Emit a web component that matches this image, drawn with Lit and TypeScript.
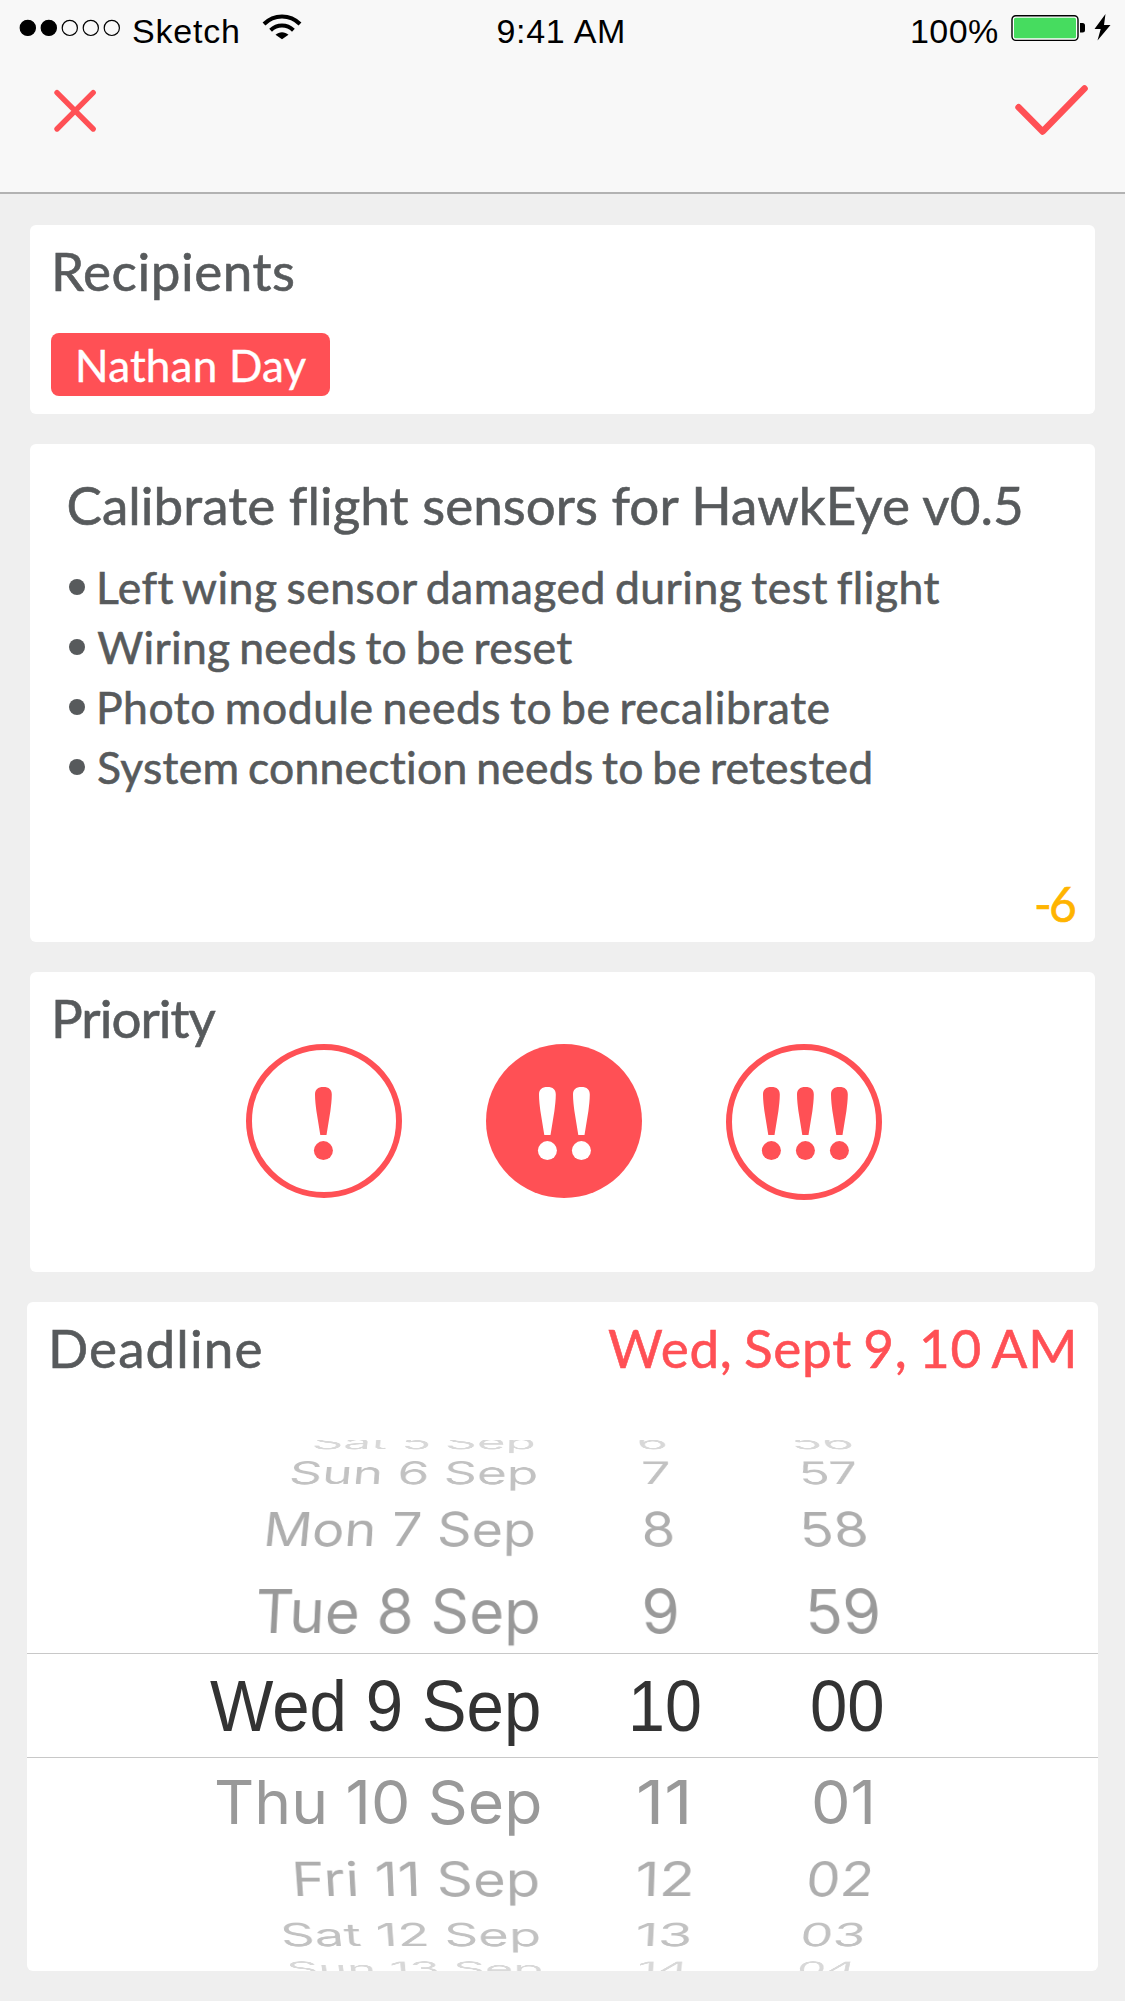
import { LitElement, html, svg, css } from "lit";
import { customElement, property } from "lit/decorators.js";
import { styleMap } from "lit/directives/style-map.js";

const pen = document.createElement("canvas").getContext("2d")!;

/** Horizontal ink bounds of a string, relative to its pen origin. */
function ink(text: string, font: string) {
  pen.font = font;
  const m = pen.measureText(text);
  return { left: -m.actualBoundingBoxLeft, width: m.actualBoundingBoxLeft + m.actualBoundingBoxRight };
}

/** One line of text, tracked so that its ink is exactly `inkWidth` wide. */
@customElement("tracked-text")
class TrackedText extends LitElement {
  static styles = css`
    :host { display: block; flex: none; line-height: 60px; -webkit-text-stroke: 0.6px currentColor; }
    .line { display: block; white-space: pre; }
  `;
  @property() text = "";
  @property() family = "Lato";
  @property({ type: Number }) size = 53;
  @property({ type: Number }) inkWidth = 100;
  @property({ type: Number }) wordGap = 0;
  @property({ type: Number }) nudge = 0;

  render() {
    const box = ink(this.text, `${this.size}px "${this.family}"`);
    const gaps = this.text.split(" ").length - 1;
    const spacing = (this.inkWidth - box.width - gaps * this.wordGap) / (this.text.length - 1);
    return html`<span class="line" style=${styleMap({
      width: `${this.inkWidth}px`,
      fontFamily: `"${this.family}", sans-serif`,
      fontSize: `${this.size}px`,
      letterSpacing: `${spacing}px`,
      wordSpacing: `${this.wordGap}px`,
      textIndent: `${this.nudge - box.left}px`,
    })}>${this.text}</span>`;
  }
}

type Cell = [text: string, left: number, right: number];
interface WheelRow {
  height: number;
  baseline: number;
  cap: number;
  tone: string;
  tilt: number;
  cells: Cell[];
  current?: boolean;
}

const ROWS: WheelRow[] = [
  { height: 16, baseline: 9, cap: 14, tone: "#d8d8d8", tilt: -0.0007, cells: [["Sat 5 Sep", 313.7, 533.7], ["6", 639.7, 666], ["56", 795, 852]] },
  { height: 41, baseline: 28.7, cap: 22.7, tone: "#c2c2c2", tilt: -0.0005, cells: [["Sun 6 Sep", 290.2, 535.5], ["7", 644.5, 670], ["57", 803, 858]] },
  { height: 65, baseline: 49.6, cap: 34.2, tone: "#aeaeae", tilt: -0.0004, cells: [["Mon 7 Sep", 266.7, 533.7], ["8", 644.4, 672.7], ["58", 805, 867.5]] },
  { height: 91, baseline: 71.3, cap: 43.9, tone: "#999999", tilt: -0.0002, cells: [["Tue 8 Sep", 257, 538], ["9", 645, 677], ["59", 810, 879]] },
  { height: 105, baseline: 77.2, cap: 49.7, tone: "#333333", tilt: 0, current: true, cells: [["Wed 9 Sep", 209.7, 538.3], ["10", 632.5, 700.5], ["00", 812.5, 883.3]] },
  { height: 85, baseline: 66, cap: 44.2, tone: "#999999", tilt: 0, cells: [["Thu 10 Sep", 216.7, 539], ["11", 638.8, 686.6], ["01", 813.8, 871]] },
  { height: 68, baseline: 53.3, cap: 33.7, tone: "#aeaeae", tilt: 0.0003, cells: [["Fri 11 Sep", 297.5, 537.5], ["12", 637.8, 690.6], ["02", 808, 869]] },
  { height: 44, baseline: 35.6, cap: 22.6, tone: "#c2c2c2", tilt: 0.0005, cells: [["Sat 12 Sep", 284.5, 538.5], ["13", 637.8, 688.9], ["03", 801.5, 861]] },
  { height: 16, baseline: 20, cap: 13.4, tone: "#d8d8d8", tilt: 0.0007, cells: [["Sun 13 Sep", 290.5, 541], ["14", 639, 685.6], ["04", 798, 852]] },
];

const FACES = {
  wheel: { family: "Inter", cap: 0.727, drop: 0.3638 },
  current: { family: "Liberation Sans", cap: 0.688, drop: 0.3465 },
};
const COLUMN_STARTS = [27, 580, 750];
const VANISH_X = 540;
const GLYPH = 64;

/** Three-column date wheel, its rows foreshortened towards the rims. */
@customElement("date-wheel")
class DateWheel extends LitElement {
  static styles = css`
    :host { display: flex; flex-direction: column; height: 531px; overflow: hidden; }
    .row { display: grid; grid-template-columns: 553px 170px 348px; flex: none; box-sizing: border-box; }
    .current { border-top: 1px solid #c8c8c8; border-bottom: 1px solid #c8c8c8; }
    .cell { justify-self: start; align-self: start; height: 0; line-height: 0; white-space: pre; font-size: 64px; }
  `;

  private cell(row: WheelRow, [text, left, right]: Cell, column: number) {
    const face = row.current ? FACES.current : FACES.wheel;
    const box = ink(text, `${GLYPH}px "${face.family}"`);
    const sx = (right - left) / box.width;
    const sy = row.cap / (GLYPH * face.cap);
    const drop = face.drop * GLYPH;
    const origin = left - box.left * sx;
    const d = origin - VANISH_X;
    const lean = row.tilt
      ? `translateX(${-d}px) matrix3d(1,0,0,0,0,1,0,${row.tilt},0,0,1,0,0,0,0,1) translateX(${d}px) `
      : "";
    return html`<span class="cell" style=${styleMap({
      fontFamily: `"${face.family}", sans-serif`,
      marginLeft: `${origin - COLUMN_STARTS[column]}px`,
      marginTop: `${row.baseline - drop}px`,
      transformOrigin: `0 ${drop}px`,
      transform: `${lean}scale(${sx}, ${sy})`,
    })}>${text}</span>`;
  }

  render() {
    return ROWS.map(row => html`
      <div class="row ${row.current ? "current" : ""}" style=${styleMap({ height: `${row.height}px`, color: row.tone })}>
        ${row.cells.map((c, i) => this.cell(row, c, i))}
      </div>`);
  }
}

/** Exclamation marks 34px apart, centred on `cx` within the badge. */
const marks = (count: number, cx: number) =>
  Array.from({ length: count }, (_, i) => {
    const x = cx + (i - (count - 1) / 2) * 34;
    return svg`<g transform="translate(${x} 0)">
      <path d="M-8.4 50.5C-8.4 45.5-5.6 43 0 43s8.4 2.500 8.400 7.500C8.400 56 7.600 62 7 67L3.100 91h-6.200L-7 67C-7.600 62-8.400 56-8.400 50.500z"/>
      <ellipse cx="0" cy="106.600" rx="9.500" ry="9.500"/>
    </g>`;
  });

const NOTES: [text: string, width: number, nudge: number][] = [
  ["Left wing sensor damaged during test flight", 840.5, 1],
  ["Wiring needs to be reset", 475, -1.8],
  ["Photo module needs to be recalibrate", 728.5, 1],
  ["System connection needs to be retested", 773, -1],
];

@customElement("app-root")
class AppRoot extends LitElement {
  static styles = css`
    :host { display: block; width: 1125px; height: 2001px; overflow: hidden; background: #efefef; color: #575a5c; font-family: Lato, sans-serif; }
    svg { display: block; flex: none; }
    .header { height: 194px; box-sizing: border-box; border-bottom: 2px solid #b2b2b2; background: #f8f8f8; }
    .status { display: grid; grid-template-columns: 497.5px 1fr 213px; height: 62px; color: #000; }
    .group { display: flex; align-items: flex-start; }
    .dots { margin: 19px 12px 0 19px; }
    .wifi { margin: 14px 0 0 24px; }
    .battery { margin: 14px 0 0 13px; }
    .bar-text { line-height: 62px; -webkit-text-stroke-width: 0; }
    .actions { display: flex; justify-content: space-between; padding: 20px 35px 0 52px; }
    .cards { display: flex; flex-direction: column; gap: 30px; padding: 31px 27px 0; }
    .card { background: #fff; border-radius: 6px; box-sizing: border-box; overflow: hidden; margin: 0 3px; }
    .recipients { height: 189px; padding: 16px 24px 0 25px; }
    .chip { display: flex; width: 279px; height: 63px; margin: 32px 0 0 -4px; padding-left: 28px; box-sizing: border-box; border-radius: 8px; background: #ff5055; color: #fff; }
    .chip-text { line-height: 65px; -webkit-text-stroke-width: 0.4px; }
    .task { height: 498px; padding: 31px 20px 0 39px; }
    .notes { list-style: none; margin: 22px 0 0; padding: 0; }
    .note { display: flex; align-items: center; height: 60px; gap: 14px; }
    .bullet { width: 16px; height: 16px; border-radius: 50%; background: #575a5c; }
    .count { display: flex; justify-content: flex-end; margin-top: 77px; color: #ffb400; }
    .priority { height: 300px; padding: 16px 24px 0 25px; }
    .levels { display: flex; gap: 84px; margin: -4px 0 0 191px; }
    .deadline { height: 669px; margin: 0; }
    .deadline-head { display: flex; justify-content: space-between; padding: 16px 23px 62px 25.5px; }
    .due { color: #ff5055; }
  `;

  render() {
    return html`
      <header class="header">
        <div class="status">
          <div class="group">
            <svg class="dots" width="102" height="18" viewBox="0 0 102 18">
              <g stroke="#000" stroke-width="1.200">
                <circle cx="8.800" cy="8.900" r="7.600"/><circle cx="29.800" cy="8.900" r="7.600"/>
                <g fill="none"><circle cx="50.800" cy="8.900" r="7.600"/><circle cx="71.800" cy="8.900" r="7.600"/><circle cx="92.800" cy="8.900" r="7.600"/></g>
              </g>
            </svg>
            <tracked-text class="bar-text" text="Sketch" family="Liberation Sans" size="34" inkWidth="105"></tracked-text>
            <svg class="wifi" width="40" height="26" viewBox="0 0 40 26">
              <g fill="none" stroke="#000" stroke-width="4"><path d="M2 10C12-.1 28-.1 38 10"/><path d="M8.600 16.200c6.500-6.200 16.300-6.200 22.800 0"/></g>
              <path d="M13.500 20.700c3.700-3.400 9.300-3.400 13 0L20 25.300z"/>
            </svg>
          </div>
          <tracked-text class="bar-text" text="9:41 AM" family="Liberation Sans" size="34" inkWidth="127.5"></tracked-text>
          <div class="group">
            <tracked-text class="bar-text" text="100%" family="Liberation Sans" size="34" inkWidth="86"></tracked-text>
            <svg class="battery" width="102" height="28" viewBox="0 0 102 28">
              <rect x="1" y="1.700" width="66" height="24.700" rx="3.800" fill="#fff" stroke="#000" stroke-width="1.400"/>
              <rect x="3" y="3.800" width="62" height="20.500" rx="1.600" fill="#46dc5f"/>
              <path d="M69 9h2.500q2.500 0 2.500 2.500v4.500q0 2.500-2.500 2.500H69z"/>
              <path d="M94.500 0 83.500 15h6.200L86.500 26.500 99.500 11h-6.500z"/>
            </svg>
          </div>
        </div>
        <div class="actions">
          <svg width="46" height="58" viewBox="0 0 46 58" fill="none" stroke="#ff5055" stroke-width="5.400" stroke-linecap="round"><path d="M5 10.700 41.200 47M41.200 10.700 5 47"/></svg>
          <svg width="76" height="58" viewBox="0 0 76 58" fill="none" stroke="#ff5055" stroke-width="6.600" stroke-linecap="round" stroke-linejoin="round"><path d="M4.600 25.300 28.600 49.500 70.500 6.500"/></svg>
        </div>
      </header>
      <main class="cards">
        <section class="card recipients">
          <tracked-text text="Recipients" inkWidth="238"></tracked-text>
          <div class="chip"><tracked-text class="chip-text" text="Nathan Day" size="44" inkWidth="227.5"></tracked-text></div>
        </section>
        <section class="card task">
          <tracked-text text="Calibrate flight sensors for HawkEye v0.5" inkWidth="955" nudge="-0.5"></tracked-text>
          <ul class="notes">
            ${NOTES.map(([text, width, nudge]) => html`<li class="note"><i class="bullet"></i><tracked-text text=${text} size="44.5" inkWidth=${width} wordGap="-3" nudge=${nudge}></tracked-text></li>`)}
          </ul>
          <div class="count"><tracked-text text="-6" size="48" inkWidth="38"></tracked-text></div>
        </section>
        <section class="card priority">
          <tracked-text text="Priority" inkWidth="160.5"></tracked-text>
          <div class="levels">
            <svg width="156" height="156" viewBox="0 0 156 156" fill="#ff5055"><ellipse cx="78" cy="77" rx="75" ry="74" fill="none" stroke="#ff5055" stroke-width="6"/>${marks(1, 77.4)}</svg>
            <svg width="156" height="156" viewBox="0 0 156 156" fill="#fff"><ellipse cx="78" cy="77" rx="78" ry="77" fill="#ff5055"/>${marks(2, 78.4)}</svg>
            <svg width="156" height="156" viewBox="0 0 156 156" fill="#ff5055"><circle cx="78" cy="78" r="75" fill="none" stroke="#ff5055" stroke-width="6"/>${marks(3, 79.4)}</svg>
          </div>
        </section>
        <section class="card deadline">
          <div class="deadline-head">
            <tracked-text text="Deadline" inkWidth="208.5" nudge="-0.5"></tracked-text>
            <tracked-text class="due" text="Wed, Sept 9, 10 AM" inkWidth="467" wordGap="-3"></tracked-text>
          </div>
          <date-wheel></date-wheel>
        </section>
      </main>
    `;
  }
}
